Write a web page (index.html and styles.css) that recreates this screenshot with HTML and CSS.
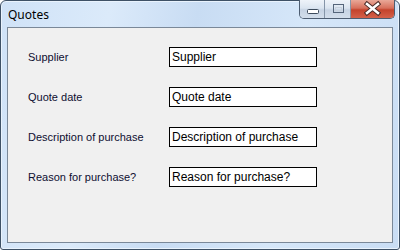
FILE: index.html
```html
<!DOCTYPE html>
<html lang="en">
<head>
  <meta charset="UTF-8" />
  <title>Quotes</title>
  <link rel="stylesheet" href="styles.css">
</head>
<body>
  <div class="window">
    <!-- Title bar -->
    <div class="titlebar">
      <span class="title">Quotes</span>
      <div class="caption-buttons">
        <div class="cap-btn min">
          <svg width="25" height="18" viewBox="0 0 25 18">
            <rect x="7.5" y="9.5" width="11" height="4" rx="1" fill="#fff" stroke="#3d4b5c"/>
          </svg>
        </div>
        <div class="cap-btn max">
          <svg width="26" height="18" viewBox="0 0 26 18">
            <rect x="8.5" y="4.5" width="10" height="8" fill="none" stroke="#55657a"/>
            <rect x="10.5" y="7.5" width="6" height="3" fill="none" stroke="#c8d2de"/>
          </svg>
        </div>
        <div class="cap-btn close">
          <svg width="43" height="18" viewBox="0 0 43 18">
            <path d="M16 4 L27 13 M27 4 L16 13" stroke="#4a2b28" stroke-width="4.5" stroke-linecap="square"/>
            <path d="M16 4 L27 13 M27 4 L16 13" stroke="#fff" stroke-width="2.5" stroke-linecap="square"/>
          </svg>
        </div>
      </div>
    </div>

    <!-- Client area -->
    <div class="client">
      <div class="form">
        <label>Supplier</label>
        <input type="text" value="Supplier" />
        <label>Quote date</label>
        <input type="text" value="Quote date" />
        <label>Description of purchase</label>
        <input type="text" value="Description of purchase" />
        <label>Reason for purchase?</label>
        <input type="text" value="Reason for purchase?" />
      </div>
    </div>
  </div>
</body>
</html>
```

FILE: styles.css
```css
* {
  box-sizing: border-box;
}

body {
  margin: 0;
  width: 400px;
  height: 250px;
  background: #fff;
}

.window {
  width: 400px;
  height: 250px;
  display: flex;
  flex-direction: column;
  border: 1px solid #3e5166;
  border-radius: 6px 6px 3px 3px;
  background: linear-gradient(100deg, #cfe2f7 0%, #dbeafa 25%, #c8dcf3 45%, #d6e7f9 70%, #c9ddf4 100%);
  box-shadow: inset 0 0 0 1px #e9f3fd;
}

.titlebar {
  height: 26px;
  display: flex;
  justify-content: space-between;
  align-items: flex-start;
}

.title {
  font-family: "Noto Sans", "Open Sans", sans-serif;
  font-size: 12px;
  color: #000;
  padding: 5px 0 0 7px;
}

.caption-buttons {
  display: flex;
  margin-right: 4px;
  margin-top: -1px;
  border: 1px solid #4d5d71;
  border-top: none;
  border-radius: 0 0 5px 5px;
  overflow: hidden;
  height: 19px;
}

.cap-btn {
  height: 18px;
}

.cap-btn svg {
  display: block;
}

.min, .max {
  background: linear-gradient(#eef3f9 0%, #dbe5f0 45%, #c6d3e3 55%, #d3deeb 100%);
  border-right: 1px solid #8595a8;
}

.min {
  width: 25px;
}

.max {
  width: 26px;
}

.close {
  width: 43px;
  background: linear-gradient(#e9a898 0%, #d7705c 45%, #c4432c 55%, #d4614a 100%);
}

.client {
  flex: 1;
  margin: 0 6px 6px 6px;
  background: #f0f0f0;
  border: 1px solid #7a8898;
}

.form {
  display: grid;
  grid-template-columns: 141px 148px;
  row-gap: 20px;
  align-items: center;
  padding: 19px 0 0 20px;
}

label {
  font-family: "Liberation Sans", Arial, sans-serif;
  font-size: 11px;
  color: #0e0e30;
}

input {
  width: 148px;
  height: 20px;
  margin: 0;
  padding: 0 2px;
  border: 1px solid #000;
  border-radius: 0;
  background: #fff;
  font-family: "Liberation Sans", Arial, sans-serif;
  font-size: 12px;
  color: #000;
  outline: none;
}
```
